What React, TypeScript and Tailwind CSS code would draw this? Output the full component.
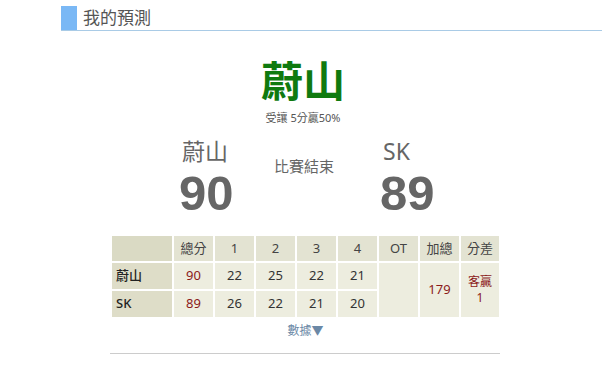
const FONT = "font-['Noto_Sans','Noto_Sans_CJK_TC',sans-serif]"

const QUARTERS = ["1", "2", "3", "4", "OT"]

const ROWS = [
  { team: "蔚山", total: 90, q: [22, 25, 22, 21] },
  { team: "SK", total: 89, q: [26, 22, 21, 20] },
]

function TeamScore({ name, score }: { name: string; score: number }) {
  return (
    <div className="flex w-[56px] flex-col items-start">
      <div className="pl-[3px] text-[23px] leading-[28px] text-[#666]">{name}</div>
      <div className="mt-[3px] font-['Liberation_Sans',sans-serif] text-[49px] leading-[50px] font-bold text-[#666]">
        {score}
      </div>
    </div>
  )
}

export default function App() {
  return (
    <div className={`h-[383px] w-[602px] bg-white ${FONT}`}>
      <div className="pl-[61px] pt-[6px]">
        <div className="flex h-[25px] items-stretch border-b border-[#a9cbe6]">
          <div className="w-[16px] bg-[#7ab8f5]" />
          <div className="pl-[6px] text-[17px] leading-[24px] text-[#555]">我的預測</div>
        </div>
      </div>

      <div className="mt-[27px] flex flex-col items-center pl-[4px]">
        <div className="text-[42px] leading-[46px] font-bold text-[#0f7a0f]">蔚山</div>
        <div className="mt-[7px] text-[11px] leading-[14px] text-[#555]">受讓 5分贏50%</div>
      </div>

      <div className="mt-[12px] flex pl-[179px]">
        <TeamScore name="蔚山" score={90} />
        <div className="ml-[36px] w-[66px] pt-[20px] text-center text-[15px] leading-[18px] whitespace-nowrap text-[#666]">
          比賽結束
        </div>
        <div className="ml-[43px]">
          <TeamScore name="SK" score={89} />
        </div>
      </div>

      <div className="mt-[16px] pl-[110px]">
        <table className="w-[391px] border-collapse border border-[#c8c8c0] text-center text-[13px] text-[#333]">
          <thead>
            <tr className="h-[27px]">
              <th className="w-[62px] border-2 border-white bg-[#dadac4] font-normal" />
              <th className="w-[41px] border-2 border-white bg-[#e3e3d2] font-normal text-[#444]">總分</th>
              {QUARTERS.map((q) => (
                <th key={q} className="w-[41px] border-2 border-white bg-[#e3e3d2] font-normal text-[#444]">
                  {q}
                </th>
              ))}
              <th className="w-[41px] border-2 border-white bg-[#e3e3d2] font-normal text-[#444]">加總</th>
              <th className="border-2 border-white bg-[#e3e3d2] font-normal text-[#444]">分差</th>
            </tr>
          </thead>
          <tbody>
            {ROWS.map((r, i) => (
              <tr key={r.team} className="h-[28px]">
                <td className="border-2 border-white bg-[#deddc8] pl-[4px] text-left font-medium text-[#222]">
                  {r.team}
                </td>
                <td className="border-2 border-white bg-[#ededdf] text-[#8b1a1a]">{r.total}</td>
                {r.q.map((v, j) => (
                  <td key={j} className="border-2 border-white bg-[#ededdf]">
                    {v}
                  </td>
                ))}
                {i === 0 ? (
                  <>
                    <td rowSpan={2} className="border-2 border-white bg-[#ededdf]" />
                    <td rowSpan={2} className="border-2 border-white bg-[#ededdf] text-[#8b1a1a]">
                      179
                    </td>
                    <td rowSpan={2} className="border-2 border-white bg-[#ededdf] text-[12px] leading-[16px] text-[#8b1a1a]">
                      <div>客贏</div>
                      <div>1</div>
                    </td>
                  </>
                ) : null}
              </tr>
            ))}
          </tbody>
        </table>
      </div>

      <div className="mt-[4px] pl-[110px]">
        <div className="w-[391px] text-center text-[12px] leading-[16px] text-[#6b88a6]">數據▼</div>
        <div className="mt-[14px] w-[390px] border-t border-[#ccc]" />
      </div>
    </div>
  )
}
